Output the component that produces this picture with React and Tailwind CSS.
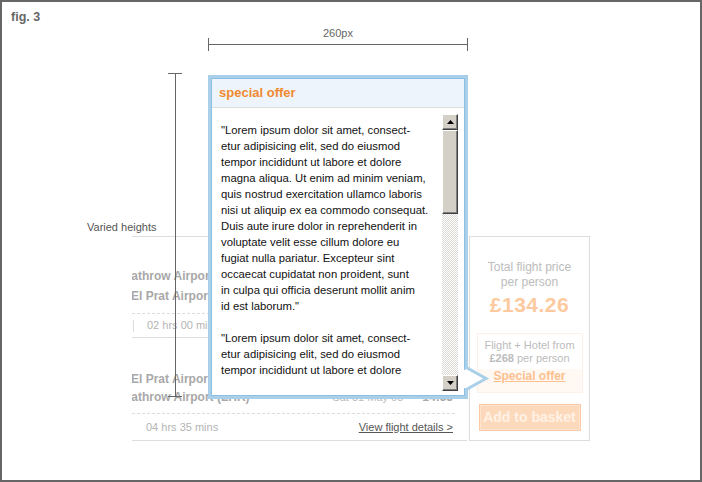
import React from 'react';

const popupLines = [
  '"Lorem ipsum dolor sit amet, consect-',
  'etur adipisicing elit, sed do eiusmod',
  'tempor incididunt ut labore et dolore',
  'magna aliqua. Ut enim ad minim veniam,',
  'quis nostrud exercitation ullamco laboris',
  'nisi ut aliquip ex ea commodo consequat.',
  'Duis aute irure dolor in reprehenderit in',
  'voluptate velit esse cillum dolore eu',
  'fugiat nulla pariatur. Excepteur sint',
  'occaecat cupidatat non proident, sunt',
  'in culpa qui officia deserunt mollit anim',
  'id est laborum."',
  '',
  '"Lorem ipsum dolor sit amet, consect-',
  'etur adipisicing elit, sed do eiusmod',
  'tempor incididunt ut labore et dolore',
];

function ScrollButton({ down }) {
  return (
    <div className="w-[16px] h-[16px] bg-[#d4d0c8] border border-t-white border-l-white border-r-[#404040] border-b-[#404040] shadow-[inset_-1px_-1px_0_#808080] flex items-center justify-center">
      <svg width="7" height="4" viewBox="0 0 7 4">
        {down ? <polygon points="0,0 7,0 3.5,4" fill="#000" /> : <polygon points="0,4 7,4 3.5,0" fill="#000" />}
      </svg>
    </div>
  );
}

function FlightCard() {
  return (
    <div className="absolute left-[130px] top-[234px] flex gap-[2px] font-['Liberation_Sans',Arial,sans-serif]">
      {/* flight list, clipped on the left */}
      <div className="w-[335px] h-[205px] overflow-hidden border-t border-b border-[#dddddd] flex flex-col">
        <div className="h-[29px]" />
        <div className="text-[12px] leading-[20px] font-bold text-[#a8a8a8] whitespace-nowrap">
          <div className="ml-[-16px]">Heathrow Airport</div>
          <div className="ml-[-1px]">El Prat Airport</div>
        </div>
        <div className="h-[7px]" />
        <div className="border-t border-dashed border-[#dddddd] mr-[12px]" />
        <div className="h-[23px] flex items-center text-[11px] text-[#b4b4b4]">
          <div className="w-px h-[12px] bg-[#dddddd] ml-[1px]" />
          <span className="ml-[13px]">02 hrs 00 mins</span>
        </div>
        <div className="border-t border-[#dddddd]" />
        <div className="h-[32px]" />
        <div className="text-[12px] leading-[18px] whitespace-nowrap">
          <div className="ml-[-1px] font-bold text-[#a8a8a8]">El Prat Airport</div>
          <div className="flex items-center pr-[14px]">
            <span className="ml-[-16px] font-bold text-[#a8a8a8] flex-1">Heathrow Airport (LHR)</span>
            <span className="text-[#bbbbbb] text-[11px]">Sat 31 May 08</span>
            <span className="ml-[19px] font-bold text-[#a8a8a8]">14:35</span>
          </div>
        </div>
        <div className="h-[7px]" />
        <div className="border-t border-dashed border-[#dddddd] mr-[12px]" />
        <div className="flex-1 flex items-center justify-between pr-[14px] text-[11px]">
          <span className="ml-[14px] text-[#b4b4b4]">04 hrs 35 mins</span>
          <span className="text-[#555555] underline">View flight details &gt;</span>
        </div>
      </div>

      {/* price panel */}
      <div className="w-[121px] h-[205px] border border-[#dddddd] flex flex-col items-center pt-[23px] text-center">
        <p className="text-[12px] leading-[15px] text-[#bcbcbc]">Total flight price</p>
        <p className="text-[12px] leading-[15px] text-[#bcbcbc]">per person</p>
        <p className="mt-[3px] text-[21px] leading-[24px] font-bold text-[#fdcaa0] tracking-[0.5px]">£134.26</p>
        <div className="mt-[16px] w-[106px] h-[60px] border border-[#fcf0e8] flex flex-col">
          <div className="pt-[5px] text-[11px] leading-[13px] text-[#bcbcbc]">
            <p>Flight + Hotel from</p>
            <p><span className="font-bold">£268</span> per person</p>
          </div>
          <div className="flex-1 mt-[4px] bg-[#fff8f3] flex items-start justify-center">
            <span className="text-[12px] leading-[15px] font-bold text-[#fdc08e] underline">Special offer</span>
          </div>
        </div>
        <div className="mt-[11px] w-[102px] h-[27px] bg-[#fdd9bb] border border-[#fcc9a4] shadow-[inset_0_0_0_1px_#fde4cf] flex items-center justify-center text-[14px] font-bold text-[#fff1e5]">
          Add to basket
        </div>
      </div>
    </div>
  );
}

function Popup() {
  return (
    <div className="absolute left-[206px] top-[73px] w-[260px] h-[324px] border-[3px] border-[#a9cfe9] font-['Liberation_Sans',Arial,sans-serif]">
      <div className="h-full border border-[#8cc0e4] flex flex-col bg-white">
        <div className="h-[29px] bg-[#edf4fb] border-b border-[#dddddd] flex items-center pl-[7px] text-[13px] font-bold text-[#f08a30]">
          special offer
        </div>
        <div className="relative flex-1 overflow-hidden">
          <div className="pl-[9px] pt-[14px] text-[11.3px] leading-[16px] text-[#111111]">
            {popupLines.map((line, i) => (
              <div key={i} className="h-[16px] whitespace-nowrap">{line}</div>
            ))}
          </div>
          <div className="absolute right-[6px] top-[6px] bottom-[4px] w-[16px] flex flex-col bg-white">
            <ScrollButton />
            <div className="h-[84px] bg-[#d4d0c8] border border-t-white border-l-white border-r-[#404040] border-b-[#404040] shadow-[inset_-1px_-1px_0_#808080]" />
            <div className="flex-1 bg-[repeating-conic-gradient(#dcdad5_0%_25%,#ffffff_0%_50%)] bg-[length:2px_2px]" />
            <ScrollButton down />
          </div>
        </div>
      </div>
    </div>
  );
}

export default function App() {
  return (
    <div className="relative w-[702px] h-[482px] bg-white border-2 border-[#666666] overflow-hidden font-['Liberation_Sans',Arial,sans-serif]">
      <div className="absolute left-[9px] top-[6px] text-[12.5px] font-bold text-[#666666]">fig. 3</div>

      {/* width annotation */}
      <div className="absolute left-[206px] top-[23px] w-[260px] text-center text-[11px] text-[#666666]">260px</div>
      <div className="absolute left-[206px] top-[36px] w-[260px] h-[13px] flex items-center">
        <div className="w-px h-full bg-[#666666]" />
        <div className="flex-1 h-px bg-[#666666]" />
        <div className="w-px h-full bg-[#666666]" />
      </div>

      <div className="absolute left-[85px] top-[217px] text-[11px] text-[#555555]">Varied heights</div>

      <FlightCard />

      {/* height annotation */}
      <div className="absolute left-[166px] top-[71px] w-[14px] h-[324px] flex flex-col items-center">
        <div className="w-full h-px bg-[#666666]" />
        <div className="flex-1 w-px bg-[#666666]" />
        <div className="w-full h-px bg-[#666666]" />
      </div>

      <Popup />

      {/* pointer to the special offer link */}
      <svg className="absolute left-[458px] top-[358px]" width="32" height="38" viewBox="0 0 32 38">
        <rect x="1" y="10" width="6" height="18" fill="#ffffff" />
        <polyline points="5.5,7 26,18.5 5.5,30" fill="#ffffff" stroke="#a9cfe9" strokeWidth="3" />
      </svg>
    </div>
  );
}
